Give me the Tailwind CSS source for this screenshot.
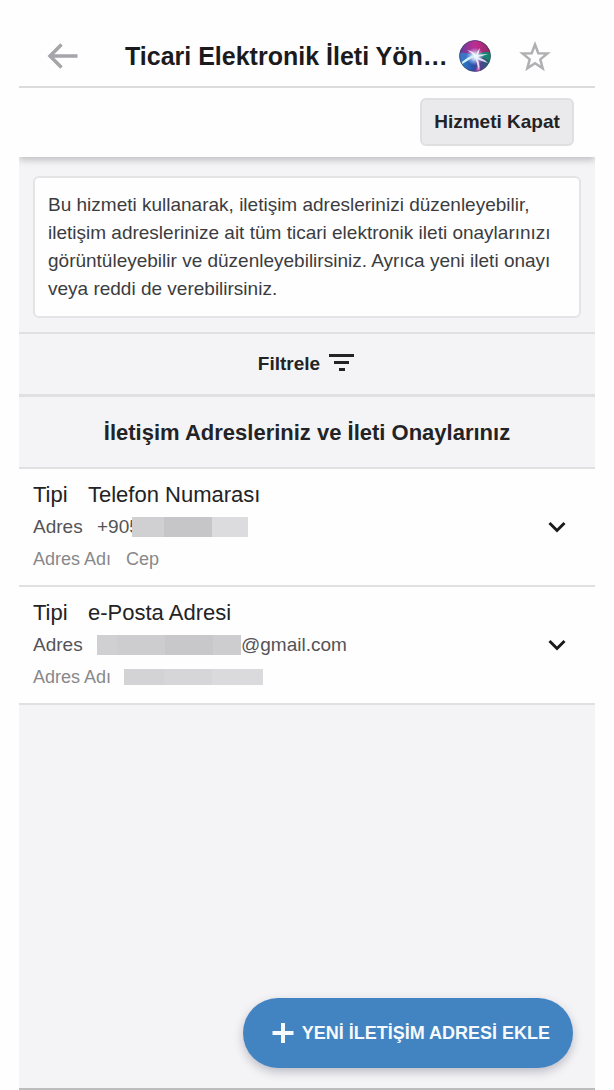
<!DOCTYPE html>
<html lang="tr">
<head>
    <meta charset="UTF-8">
    <meta name="viewport" content="width=device-width, initial-scale=1.0">
    <title>Ticari Elektronik İleti Yönetimi</title>
    <script src="https://cdn.jsdelivr.net/npm/@tailwindcss/browser@4"></script>
    <style>
        body {
            font-family: 'Liberation Sans', Arial, sans-serif;
        }
    </style>
</head>
<body class="bg-[#fefefe] text-[#232325]">
    <div class="min-h-screen mx-[19px] flex flex-col bg-[#f4f4f6] border-b-2 border-[#bdbdbf]">

        <!-- Üst başlık -->
        <header class="bg-[#fefefe] h-22 pt-[26px] pl-7 pr-11 flex items-center border-b-2 border-[#dcdcde]">
            <button type="button" aria-label="Geri" class="shrink-0">
                <svg class="w-8 h-8" viewBox="0 0 32 32" fill="none" stroke="#a5a5aa" stroke-width="3.500">
                    <path d="M30.500 16H3M14.500 4.500L3 16L14.500 27.500" />
                </svg>
            </button>
            <h1 class="ml-[46px] flex-1 text-[25px] leading-8 font-bold whitespace-nowrap text-[#1b1b1d]">Ticari Elektronik İleti Yön…</h1>
            <svg class="w-8 h-8 shrink-0" viewBox="0 0 32 32">
                <defs>
                    <linearGradient id="top" x1="0" y1="0" x2="1" y2="0">
                        <stop offset="0" stop-color="#5a3f9c" />
                        <stop offset="0.5" stop-color="#c22c92" />
                        <stop offset="1" stop-color="#8c2a5e" />
                    </linearGradient>
                    <linearGradient id="bottom" x1="0" y1="0" x2="1" y2="0">
                        <stop offset="0" stop-color="#2a8fd0" />
                        <stop offset="0.45" stop-color="#2c50a8" />
                        <stop offset="0.65" stop-color="#5b3d94" />
                        <stop offset="1" stop-color="#0c7060" />
                    </linearGradient>
                    <radialGradient id="glow">
                        <stop offset="0" stop-color="#fff" />
                        <stop offset="0.35" stop-color="#dff2ff" stop-opacity="0.8" />
                        <stop offset="1" stop-color="#a8c8ff" stop-opacity="0" />
                    </radialGradient>
                    <clipPath id="disc"><circle cx="16" cy="16" r="15.500" /></clipPath>
                </defs>
                <g clip-path="url(#disc)">
                    <rect width="32" height="32" fill="url(#bottom)" />
                    <path d="M0 0H32V13Q24 11 17 16Q9 12 0 14Z" fill="url(#top)" />
                    <path d="M0 13Q8 12 15 16Q8 16 0 22Z" fill="#3d74c4" />
                    <path d="M17 16Q24 10 32 13V22Q24 16 17 16Z" fill="#178570" />
                    <path d="M17 17Q22 22 21 32H17Q19 25 17 17Z" fill="#d457b4" />
                    <circle cx="16" cy="16.500" r="9" fill="url(#glow)" />
                    <path d="M3 22Q9 16 17 15Q12 19 3 24Z" fill="#d5f3ff" />
                    <path d="M16 17Q12 12 8 10Q14 11 17 15Q18 11 21 8Q20 12 19 15Q24 14 29 14Q24 16 19 17Q25 19 29 23Q22 21 18 19Q21 23 20 30Q18 23 16 17Z" fill="#f2f8ff" fill-opacity="0.85" />
                </g>
                <circle cx="16" cy="16" r="15.500" fill="none" stroke="#3d3560" stroke-width="1" stroke-opacity="0.6" />
            </svg>
            <button type="button" aria-label="Favorilere ekle" class="ml-7 shrink-0">
                <svg class="w-8 h-8" viewBox="0 0 32 32" fill="none" stroke="#b0b0b3" stroke-width="2.500">
                    <path d="M16 4.500L19.300 13.200L28.500 13.500L21.300 19.400L23.700 28.300L16 23.300L8.300 28.300L10.700 19.400L3.500 13.500L12.700 13.200Z" />
                </svg>
            </button>
        </header>

        <!-- Gölge yalnızca alt kenarda görünür -->
        <div class="relative bg-[#fefefe] h-[69px] pr-[21px] pb-0.5 flex items-center justify-end shadow-[0_3px_7px_rgba(0,0,0,0.22)] [clip-path:inset(0_0_-12px_0)]">
            <button type="button" class="w-[154px] h-12 pt-0.5 rounded-md border-2 border-[#dfdfe1] bg-[#eaeaec] text-[19px] font-bold whitespace-nowrap">Hizmeti Kapat</button>
        </div>

        <main class="grow">
            <!-- Bilgilendirme kutusu -->
            <section class="pt-[19px] px-[14px] pb-[14px]">
                <p class="bg-[#fefefe] rounded-md border-2 border-[#e4e4e6] px-[13px] py-[13px] text-[19px] leading-7 text-[#3c3c3e]">Bu hizmeti kullanarak, iletişim adreslerinizi düzenleyebilir, iletişim adreslerinize ait tüm ticari elektronik ileti onaylarınızı görüntüleyebilir ve düzenleyebilirsiniz. Ayrıca yeni ileti onayı veya reddi de verebilirsiniz.</p>
            </section>

            <button type="button" class="w-full h-[65px] flex items-center justify-center gap-2 border-t-2 border-b-3 border-[#e0e0e2] text-[19px] font-bold">
                Filtrele
                <svg class="w-7 h-7" viewBox="0 0 28 28" fill="#232325">
                    <path d="M1 4H26V7H1ZM6 11H21V14H6ZM11 18H17V21H11Z" />
                </svg>
            </button>

            <h2 class="h-[72px] flex items-center justify-center border-b-2 border-[#e0e0e2] text-[22px] font-bold">İletişim Adresleriniz ve İleti Onaylarınız</h2>

            <!-- Adres listesi -->
            <ul class="bg-[#fefefe]">
                <li class="h-[118px] pl-[14px] pr-6 flex items-center justify-between border-b-2 border-[#e0e0e2]">
                    <dl class="leading-8">
                        <div class="flex items-center text-[22px]">
                            <dt class="w-[55px]">Tipi</dt>
                            <dd>Telefon Numarası</dd>
                        </div>
                        <div class="flex items-center text-[19px] text-[#545457]">
                            <dt class="w-16">Adres</dt>
                            <dd class="flex items-center">+905
                                <!-- Numaranın gizlenen kısmı -->
                                <span class="relative -ml-2 flex h-5">
                                    <span class="w-8 bg-[#d0d0d2]"></span>
                                    <span class="w-12 bg-[#c6c6c8]"></span>
                                    <span class="w-9 bg-[#dcdcde]"></span>
                                </span>
                            </dd>
                        </div>
                        <div class="flex items-center text-[18px] text-[#88888b]">
                            <dt class="w-[93px]">Adres Adı</dt>
                            <dd>Cep</dd>
                        </div>
                    </dl>
                    <button type="button" aria-label="Detayı göster">
                        <svg class="w-7 h-7" viewBox="0 0 28 28" fill="none" stroke="#1b1b1d" stroke-width="3">
                            <path d="M6.500 10L14 17.500L21.500 10" />
                        </svg>
                    </button>
                </li>
                <li class="h-[118px] pl-[14px] pr-6 flex items-center justify-between border-b-2 border-[#e0e0e2]">
                    <dl class="leading-8">
                        <div class="flex items-center text-[22px]">
                            <dt class="w-[55px]">Tipi</dt>
                            <dd>e-Posta Adresi</dd>
                        </div>
                        <div class="flex items-center text-[19px] text-[#545457]">
                            <dt class="w-16">Adres</dt>
                            <dd class="flex items-center">
                                <span class="flex h-5">
                                    <span class="w-5 bg-[#d0d0d2]"></span>
                                    <span class="w-12 bg-[#cdcdcf]"></span>
                                    <span class="w-12 bg-[#c8c8ca]"></span>
                                    <span class="w-7 bg-[#cdcdcf]"></span>
                                </span>
                                @gmail.com
                            </dd>
                        </div>
                        <div class="flex items-center text-[18px] text-[#88888b]">
                            <dt class="w-[91px]">Adres Adı</dt>
                            <dd class="flex h-4">
                                <span class="w-10 bg-[#d3d3d5]"></span>
                                <span class="w-12 bg-[#d6d6d8]"></span>
                                <span class="w-[51px] bg-[#dadadc]"></span>
                            </dd>
                        </div>
                    </dl>
                    <button type="button" aria-label="Detayı göster">
                        <svg class="w-7 h-7" viewBox="0 0 28 28" fill="none" stroke="#1b1b1d" stroke-width="3">
                            <path d="M6.500 10L14 17.500L21.500 10" />
                        </svg>
                    </button>
                </li>
            </ul>
        </main>

        <footer class="flex justify-end pr-[22px] pb-5">
            <button type="button" class="h-[70px] px-[23px] flex items-center gap-1 rounded-full bg-[#4283c2] text-[#f6fafd] text-[18px] font-bold whitespace-nowrap shadow-[0_4px_10px_rgba(60,60,90,0.3)]">
                <svg class="w-8 h-8" viewBox="0 0 32 32" fill="none" stroke="currentColor" stroke-width="4">
                    <path d="M17 6V26M6.500 16H27.500" />
                </svg>
                YENİ İLETİŞİM ADRESİ EKLE
            </button>
        </footer>
    </div>
</body>
</html>
